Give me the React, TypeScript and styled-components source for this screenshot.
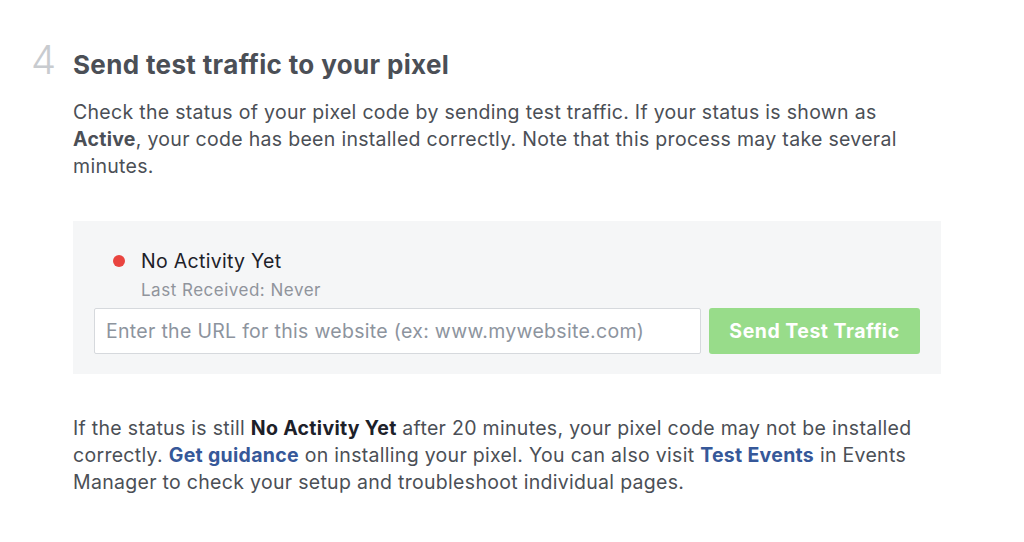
import React from 'react';
import styled, { createGlobalStyle } from 'styled-components';

const GlobalStyle = createGlobalStyle`
  body {
    margin: 0;
    background: #ffffff;
    font-family: Inter, 'Liberation Sans', Arial, sans-serif;
  }
`;

const Page = styled.div`
  width: 1024px;
  height: 542px;
  box-sizing: border-box;
  padding: 35px 0 0 30px;
  color: #4b4f56;
`;

const Header = styled.div`
  display: flex;
  align-items: baseline;
  height: 44px;
`;

const StepNumber = styled.span`
  width: 43px;
  font-size: 40px;
  font-weight: 300;
  color: #c8cbcf;
  padding-left: 1px;
  box-sizing: border-box;
`;

const Title = styled.h2`
  margin: 0;
  font-size: 26px;
  font-weight: 700;
  letter-spacing: 0.35px;
  color: #4b4f56;
`;

const Body = styled.div`
  padding-left: 43px;
  width: 862px;
`;

const Paragraph = styled.p`
  margin: 0;
  font-size: 19.5px;
  line-height: 27px;
  letter-spacing: 0.3px;
  color: #4b4f56;
`;

const Intro = styled(Paragraph)`
  margin-top: 20px;
`;

const Strong = styled.b<{ $dark?: boolean }>`
  font-weight: 700;
  color: ${(p) => (p.$dark ? '#1d2129' : '#4b4f56')};
`;

const Link = styled.a`
  color: #365899;
  font-weight: 700;
  text-decoration: none;
`;

const TestPanel = styled.div`
  margin-top: 41px;
  background: #f5f6f7;
  padding: 25px 20px 20px 21px;
  height: 153px;
  width: 868px;
  box-sizing: border-box;
`;

const StatusRow = styled.div`
  display: flex;
  align-items: center;
  padding-left: 19px;
  height: 30px;
`;

const Dot = styled.span`
  width: 12px;
  height: 12px;
  border-radius: 50%;
  background: #e9443f;
  margin-right: 16px;
`;

const StatusLabel = styled.span`
  font-size: 19.5px;
  letter-spacing: 0.3px;
  color: #1d2129;
`;

const SubLabel = styled.div`
  font-size: 17px;
  letter-spacing: 0.5px;
  color: #90949c;
  padding-left: 47px;
  height: 28px;
  line-height: 28px;
`;

const FormRow = styled.div`
  display: flex;
  gap: 8px;
  margin-top: 4px;
`;

const UrlInput = styled.input`
  width: 607px;
  height: 46px;
  box-sizing: border-box;
  border: 1px solid #d6d9dd;
  border-radius: 2px;
  background: #ffffff;
  padding: 0 11px;
  font-family: Inter, 'Liberation Sans', Arial, sans-serif;
  font-size: 19.5px;
  letter-spacing: 0.3px;
  color: #1d2129;
  outline: none;
  &::placeholder {
    color: #8d949e;
  }
`;

const SendButton = styled.button`
  width: 211px;
  height: 46px;
  border: none;
  border-radius: 3px;
  background: #98dc8a;
  color: #ffffff;
  font-family: Inter, 'Liberation Sans', Arial, sans-serif;
  font-size: 19.5px;
  font-weight: 700;
  letter-spacing: 0.5px;
  cursor: default;
`;

const Outro = styled(Paragraph)`
  margin-top: 41px;
`;

const App = () => {
  return (
    <>
      <GlobalStyle />
      <Page>
        <Header>
          <StepNumber>4</StepNumber>
          <Title>Send test traffic to your pixel</Title>
        </Header>
        <Body>
          <Intro>
            Check the status of your pixel code by sending test traffic. If your status is shown as{' '}
            <Strong>Active</Strong>, your code has been installed correctly. Note that this process may take several
            minutes.
          </Intro>
          <TestPanel>
            <StatusRow>
              <Dot />
              <StatusLabel>No Activity Yet</StatusLabel>
            </StatusRow>
            <SubLabel>Last Received: Never</SubLabel>
            <FormRow>
              <UrlInput placeholder="Enter the URL for this website (ex: www.mywebsite.com)" />
              <SendButton>Send Test Traffic</SendButton>
            </FormRow>
          </TestPanel>
          <Outro>
            If the status is still <Strong $dark>No Activity Yet</Strong> after 20 minutes, your pixel code may not be
            installed correctly. <Link>Get guidance</Link> on installing your pixel. You can also visit{' '}
            <Link>Test Events</Link> in Events Manager to check your setup and troubleshoot individual pages.
          </Outro>
        </Body>
      </Page>
    </>
  );
};

export default App;
